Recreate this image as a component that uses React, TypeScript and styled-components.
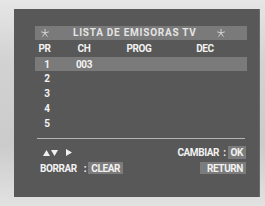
import React from 'react';
import styled, { createGlobalStyle } from 'styled-components';

const GlobalStyle = createGlobalStyle`
  html, body {
    margin: 0;
    padding: 0;
    width: 265px;
    height: 206px;
    overflow: hidden;
  }
  body {
    font-family: "Liberation Sans Narrow", Roboto, "Liberation Sans", sans-serif;
    font-weight: 700;
  }
`;

const Frame = styled.div`
  width: 265px;
  height: 206px;
  box-sizing: border-box;
  padding: 9px 6px 9px 14px;
  background: linear-gradient(180deg, #e6e6e6 0%, #d2d2d2 30%, #cbcbcb 70%, #e2e2e2 100%);
`;

const Panel = styled.div`
  height: 188px;
  box-sizing: border-box;
  padding: 17px 0 0 21px;
  background: #585858;
  box-shadow: 1px 0 0 #6a6a6a;
`;

const Content = styled.div`
  width: 212px;
  color: #f2f2f2;
  font-size: 10px;
  letter-spacing: -0.4px;
  white-space: nowrap;
`;

const TitleBar = styled.div`
  display: flex;
  align-items: center;
  height: 14px;
  padding: 0 22px 0 6px;
  background: #7a7a7a;
  color: #e4e4e4;
`;

const TitleText = styled.span`
  margin-left: 24px;
  letter-spacing: 0.75px;
  line-height: 14px;
  flex: 1;
`;

const Grid = styled.div<{ $h: number; $hl?: boolean }>`
  display: grid;
  grid-template-columns: 24px 50px 60px 72px 1fr;
  align-items: center;
  height: ${({ $h }) => $h}px;
  background: ${({ $hl }) => ($hl ? '#7a7a7a' : 'transparent')};
  text-align: center;
`;

const HeadCell = styled.span<{ $shift?: number }>`
  padding-right: ${({ $shift }) => $shift ?? 0}px;
`;

const Separator = styled.div`
  height: 1px;
  margin: 7px 2px 7px 2px;
  background: #b4b4b4;
`;

const FootRow = styled.div<{ $h: number; $gap?: number }>`
  display: flex;
  align-items: center;
  justify-content: space-between;
  height: ${({ $h }) => $h}px;
  margin-top: ${({ $gap }) => $gap ?? 0}px;
  padding: 0 1px 0 5px;
`;

const Arrows = styled.div`
  display: flex;
  align-items: center;
  gap: 1px;
  padding-left: 3px;
`;

const Pair = styled.div`
  display: flex;
  align-items: center;
  height: 100%;
`;

const Colon = styled.span<{ $l: number; $r: number }>`
  margin: 0 ${({ $r }) => $r}px 0 ${({ $l }) => $l}px;
`;

const Key = styled.span<{ $padL?: number }>`
  display: flex;
  align-items: center;
  height: 100%;
  padding: 0 3px 0 ${({ $padL }) => $padL ?? 3}px;
  background: #7c7c7c;
`;

const Star: React.FC = () => (
  <svg width="8" height="8" viewBox="0 0 10 10">
    <g stroke="#e8e8e8" strokeWidth="1" fill="none">
      <line x1="5" y1="5" x2="5" y2="0" />
      <line x1="5" y1="5" x2="9.8" y2="3.5" />
      <line x1="5" y1="5" x2="8" y2="9.5" />
      <line x1="5" y1="5" x2="2" y2="9.5" />
      <line x1="5" y1="5" x2="0.2" y2="3.5" />
    </g>
  </svg>
);

const Tri: React.FC<{ dir: 'up' | 'down' | 'right' }> = ({ dir }) => {
  const pts = dir === 'up' ? '0,6 3.5,0 7,6' : dir === 'down' ? '0,0 7,0 3.5,6' : '0,0 6,3.5 0,7';
  return (
    <svg width={dir === 'right' ? 6 : 7} height={dir === 'right' ? 7 : 6} viewBox={dir === 'right' ? '0 0 6 7' : '0 0 7 6'}>
      <polygon points={pts} fill="#f0f0f0" />
    </svg>
  );
};

const ArrowGap = styled.span`
  width: 6px;
`;

const rows = [
  { pr: '1', ch: '003' },
  { pr: '2', ch: '' },
  { pr: '3', ch: '' },
  { pr: '4', ch: '' },
  { pr: '5', ch: '' },
];

export default function App() {
  return (
    <>
      <GlobalStyle />
      <Frame>
        <Panel>
          <Content>
            <TitleBar>
              <Star />
              <TitleText>LISTA DE EMISORAS TV</TitleText>
              <Star />
            </TitleBar>
            <Grid $h={17}>
              <HeadCell $shift={5}>PR</HeadCell>
              <HeadCell>CH</HeadCell>
              <HeadCell>PROG</HeadCell>
              <HeadCell>DEC</HeadCell>
            </Grid>
            {rows.map((r, i) => (
              <Grid key={r.pr} $h={i === 0 ? 14 : 15} $hl={i === 0}>
                <span>{r.pr}</span>
                <span>{r.ch}</span>
              </Grid>
            ))}
            <Separator />
            <FootRow $h={13}>
              <Arrows>
                <Tri dir="up" />
                <Tri dir="down" />
                <ArrowGap />
                <Tri dir="right" />
              </Arrows>
              <Pair>
                CAMBIAR<Colon $l={4} $r={2}>:</Colon>
                <Key $padL={3}>OK</Key>
              </Pair>
            </FootRow>
            <FootRow $h={12} $gap={3}>
              <Pair>
                BORRAR<Colon $l={7} $r={2}>:</Colon>
                <Key>CLEAR</Key>
              </Pair>
              <Pair>
                <Key $padL={7}>RETURN</Key>
              </Pair>
            </FootRow>
          </Content>
        </Panel>
      </Frame>
    </>
  );
}
